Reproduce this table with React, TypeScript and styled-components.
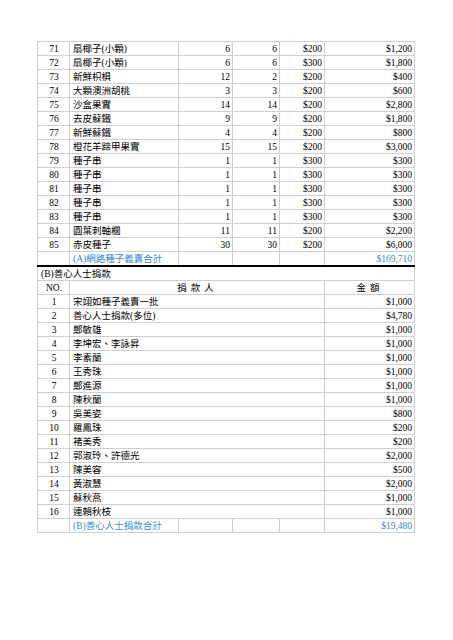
import styled, { createGlobalStyle } from "styled-components";

const GlobalStyle = createGlobalStyle`
  body {
    margin: 0;
    background: #fff;
  }
`;

const Page = styled.div`
  padding: 41px 0 0 37px;
  font-family: "Liberation Serif", "Noto Sans CJK TC", serif;
  font-size: 9.5px;
  color: #000;
`;

const Sheet = styled.table`
  border-collapse: collapse;
  table-layout: fixed;
  width: 377px;
`;

const Row = styled.tr<{ $thick?: boolean }>`
  height: 14px;
  td {
    border-top: ${(p) => (p.$thick ? "2px solid #000" : "1px solid #cfcfcf")};
  }
`;

const Cell = styled.td<{ $align?: "left" | "center" | "right"; $blue?: boolean }>`
  border: 1px solid #cfcfcf;
  padding: 0 2px 0 3px;
  height: 13px;
  line-height: 12px;
  vertical-align: bottom;
  white-space: nowrap;
  overflow: hidden;
  text-align: ${(p) => p.$align || "left"};
  color: ${(p) => (p.$blue ? "#3a88cf" : "inherit")};
`;

const Spaced = styled.span`
  letter-spacing: 4px;
`;

type Sale = [number, string, number, number, string, string];

const sales: Sale[] = [
  [71, "扇椰子(小顆)", 6, 6, "$200", "$1,200"],
  [72, "扇椰子(小顆)", 6, 6, "$300", "$1,800"],
  [73, "新鮮枳椇", 12, 2, "$200", "$400"],
  [74, "大顆澳洲胡桃", 3, 3, "$200", "$600"],
  [75, "沙盒果實", 14, 14, "$200", "$2,800"],
  [76, "去皮蘇鐵", 9, 9, "$200", "$1,800"],
  [77, "新鮮蘇鐵", 4, 4, "$200", "$800"],
  [78, "橙花羊蹄甲果實", 15, 15, "$200", "$3,000"],
  [79, "種子串", 1, 1, "$300", "$300"],
  [80, "種子串", 1, 1, "$300", "$300"],
  [81, "種子串", 1, 1, "$300", "$300"],
  [82, "種子串", 1, 1, "$300", "$300"],
  [83, "種子串", 1, 1, "$300", "$300"],
  [84, "圓葉刺軸櫚", 11, 11, "$200", "$2,200"],
  [85, "赤皮種子", 30, 30, "$200", "$6,000"],
];

const donors: [string, string][] = [
  ["宋翊如種子義賣一批", "$1,000"],
  ["善心人士捐款(多位)", "$4,780"],
  ["鄭敏雄", "$1,000"],
  ["李坤宏、李詠昇", "$1,000"],
  ["李素蘭", "$1,000"],
  ["王秀珠", "$1,000"],
  ["鄭進源", "$1,000"],
  ["陳秋蘭", "$1,000"],
  ["吳美姿", "$800"],
  ["羅鳳珠", "$200"],
  ["褚美秀", "$200"],
  ["郭淑玲、許德光", "$2,000"],
  ["陳美容", "$500"],
  ["黃淑慧", "$2,000"],
  ["蘇秋燕", "$1,000"],
  ["連賴秋枝", "$1,000"],
];

export default function App() {
  return (
    <Page>
      <GlobalStyle />
      <Sheet>
        <colgroup>
          <col style={{ width: 32 }} />
          <col style={{ width: 109 }} />
          <col style={{ width: 54 }} />
          <col style={{ width: 47 }} />
          <col style={{ width: 45 }} />
          <col style={{ width: 90 }} />
        </colgroup>
        <tbody>
          {sales.map(([no, item, qty, sold, price, total]) => (
            <Row key={no}>
              <Cell $align="center">{no}</Cell>
              <Cell>{item}</Cell>
              <Cell $align="right">{qty}</Cell>
              <Cell $align="right">{sold}</Cell>
              <Cell $align="right">{price}</Cell>
              <Cell $align="right">{total}</Cell>
            </Row>
          ))}
          <Row>
            <Cell />
            <Cell $blue>(A)網路種子義賣合計</Cell>
            <Cell />
            <Cell />
            <Cell />
            <Cell $align="right" $blue>
              $169,710
            </Cell>
          </Row>

          <Row $thick>
            <Cell colSpan={6}>(B)善心人士捐款</Cell>
          </Row>
          <Row>
            <Cell $align="center">NO.</Cell>
            <Cell colSpan={4} $align="center">
              <Spaced>捐款人</Spaced>
            </Cell>
            <Cell $align="center">
              <Spaced>金額</Spaced>
            </Cell>
          </Row>
          {donors.map(([name, amount], i) => (
            <Row key={name}>
              <Cell $align="center">{i + 1}</Cell>
              <Cell colSpan={4}>{name}</Cell>
              <Cell $align="right">{amount}</Cell>
            </Row>
          ))}
          <Row>
            <Cell />
            <Cell $blue>(B)善心人士捐款合計</Cell>
            <Cell />
            <Cell />
            <Cell />
            <Cell $align="right" $blue>
              $19,480
            </Cell>
          </Row>
        </tbody>
      </Sheet>
    </Page>
  );
}
